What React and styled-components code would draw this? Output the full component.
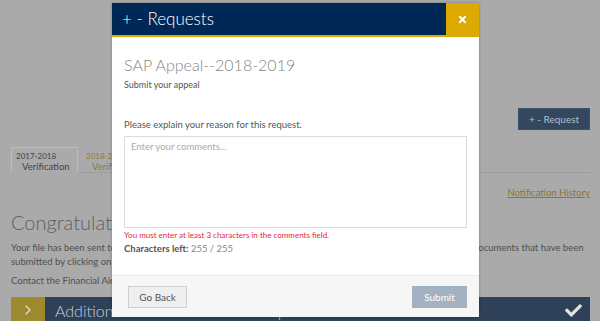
import React from "react";
import styled, { createGlobalStyle } from "styled-components";
import { FaTimes, FaCheck } from "react-icons/fa";
import { FiChevronRight } from "react-icons/fi";

const GlobalStyle = createGlobalStyle`
  html, body {
    margin: 0;
    padding: 0;
    background: #aaaaaa;
    font-family: Lato, "Open Sans", sans-serif;
    overflow: hidden;
  }
`;

export default function App() {
  return (
    <>
      <GlobalStyle />
      <Page>
        <Toolbar>
          <RequestButton>+ - Request</RequestButton>
        </Toolbar>

        <Tabs>
          <Tab $active>
            <span className="year">2017-2018</span>
            <span className="label">Verification</span>
          </Tab>
          <Tab>
            <span className="year">2018-2019</span>
            <span className="label">Verification</span>
          </Tab>
        </Tabs>

        <HistoryRow>
          <a href="#history">Notification History</a>
        </HistoryRow>

        <Heading>Congratulations!</Heading>
        <Paragraph>
          Your file has been sent to the Financial Aid Office for review and processing. You can check status and view the documents that have been
          <br />
          submitted by clicking on the links below.
        </Paragraph>
        <Paragraph>Contact the Financial Aid Office with any questions.</Paragraph>

        <InfoBar>
          <span className="toggle">
            <FiChevronRight />
          </span>
          <span className="title">Additional Info: 2017 - 2018 Dependent Asset Free Form</span>
          <FaCheck className="check" />
        </InfoBar>
      </Page>

      <Modal>
        <ModalHeader>
          <h2>+ - Requests</h2>
          <CloseButton aria-label="Close">
            <FaTimes />
          </CloseButton>
        </ModalHeader>

        <ModalBody>
          <h3>SAP Appeal--2018-2019</h3>
          <p className="sub">Submit your appeal</p>

          <FieldLabel>Please explain your reason for this request.</FieldLabel>
          <Comments placeholder="Enter your comments..." />
          <ErrorText>You must enter at least 3 characters in the comments field.</ErrorText>
          <Counter>
            <b>Characters left:</b> 255 / 255
          </Counter>
        </ModalBody>

        <ModalFooter>
          <FooterButton>Go Back</FooterButton>
          <FooterButton $primary disabled>
            Submit
          </FooterButton>
        </ModalFooter>
      </Modal>
    </>
  );
}

const Page = styled.div`
  width: 600px;
  height: 321px;
  box-sizing: border-box;
  padding: 108px 10px 0 11px;
  color: #555;
`;

const Toolbar = styled.div`
  display: flex;
  justify-content: flex-end;
  margin-bottom: 17px;
`;

const RequestButton = styled.button`
  width: 72px;
  height: 22px;
  border: 1px solid #3e5068;
  background: #33475f;
  color: #b6bfcb;
  font-family: Lato, sans-serif;
  font-size: 10px;
  padding: 0;
`;

const Tabs = styled.div`
  display: flex;
  border-bottom: 1px solid #9c9c9c;
`;

const Tab = styled.div`
  width: 67px;
  height: 26px;
  box-sizing: border-box;
  display: flex;
  flex-direction: column;
  padding: 3px 0 0 4px;
  margin-bottom: -1px;
  margin-right: 3px;
  color: ${(p) => (p.$active ? "#444" : "#8c7a3c")};
  border: 1px solid ${(p) => (p.$active ? "#bcbcbc" : "transparent")};
  border-bottom: 1px solid ${(p) => (p.$active ? "#aaaaaa" : "#9c9c9c")};

  .year {
    font-size: 8px;
    line-height: 10px;
  }

  .label {
    padding-left: 6px;
    font-size: 9.5px;
    line-height: 12px;
  }
`;

const HistoryRow = styled.div`
  display: flex;
  justify-content: flex-end;
  margin-top: 14px;

  a {
    color: #8c7532;
    font-size: 9.5px;
  }
`;

const Heading = styled.h1`
  margin: 12px 0 7px;
  font-size: 20px;
  font-weight: 300;
  color: #5e5e5e;
  line-height: 24px;
`;

const Paragraph = styled.p`
  margin: 0 0 5px;
  font-size: 9.5px;
  line-height: 14px;
  color: #4f4f4f;
  white-space: nowrap;
`;

const InfoBar = styled.div`
  display: flex;
  align-items: center;
  height: 26px;
  margin-top: 9px;
  background: #2f4159;
  color: #c9d0d9;

  .toggle {
    width: 34px;
    align-self: stretch;
    display: flex;
    align-items: center;
    justify-content: center;
    background: #9d8a2f;
    font-size: 16px;
    color: #e0dccb;
  }

  .title {
    flex: 1;
    padding-left: 10px;
    font-size: 16px;
    font-weight: 300;
    white-space: nowrap;
  }

  .check {
    font-size: 17px;
    color: #e2e2e2;
    margin-right: 8px;
  }
`;

/* ── modal ── */
const Modal = styled.div`
  position: absolute;
  left: 112px;
  top: 3px;
  width: 367px;
  height: 314px;
  display: flex;
  flex-direction: column;
  background: #fff;
  box-shadow: 0 0 3px rgba(0, 0, 0, 0.25);
`;

const ModalHeader = styled.div`
  display: flex;
  height: 32px;
  background: #002857;
  border-bottom: 2px solid #dcaa00;

  h2 {
    flex: 1;
    margin: 0;
    padding-left: 10px;
    font-size: 17px;
    font-weight: 300;
    line-height: 32px;
    color: #fff;
  }
`;

const CloseButton = styled.button`
  width: 33px;
  border: 0;
  padding: 0;
  background: #dcaa00;
  color: #fff;
  font-size: 11px;
  display: flex;
  align-items: center;
  justify-content: center;
`;

const ModalBody = styled.div`
  flex: 1;
  padding: 17px 12px 0 12px;

  h3 {
    margin: 0;
    font-size: 16px;
    font-weight: 300;
    line-height: 22px;
    color: #858585;
  }

  .sub {
    margin: 3px 0 0;
    font-size: 9px;
    color: #555;
  }
`;

const FieldLabel = styled.p`
  margin: 29px 0 6px;
  font-size: 9.5px;
  color: #555;
`;

const Comments = styled.textarea`
  display: block;
  width: 100%;
  height: 92px;
  box-sizing: border-box;
  resize: none;
  border: 1px solid #dcdcdc;
  padding: 4px 6px;
  font-family: Lato, sans-serif;
  font-size: 9.5px;

  &::placeholder {
    color: #aaa;
  }
`;

const ErrorText = styled.p`
  margin: 2px 0 0;
  font-size: 8px;
  color: #e3263a;
`;

const Counter = styled.p`
  margin: 3px 0 0;
  font-size: 9.5px;
  color: #888;

  b {
    color: #555;
  }
`;

const ModalFooter = styled.div`
  display: flex;
  justify-content: space-between;
  align-items: center;
  height: 41px;
  padding: 0 12px 0 16px;
  background: #f6f6f6;
  border-top: 1px solid #e8e8e8;
`;

const FooterButton = styled.button`
  height: 22px;
  padding: 0;
  width: ${(p) => (p.$primary ? "55px" : "59px")};
  font-family: Lato, sans-serif;
  font-size: 10px;
  border: 1px solid ${(p) => (p.$primary ? "#a3b2c3" : "#cfcfcf")};
  background: ${(p) => (p.$primary ? "#a3b2c3" : "#efefef")};
  color: ${(p) => (p.$primary ? "#fff" : "#555")};
`;
